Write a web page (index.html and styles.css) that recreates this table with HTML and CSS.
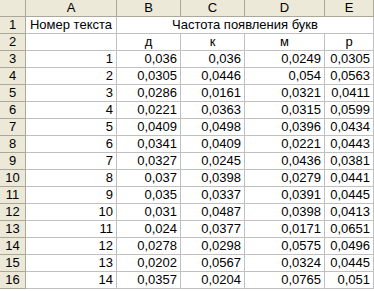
FILE: index.html
```html
<!DOCTYPE html>
<html lang="ru">
<head>
<meta charset="utf-8">
<title>Частота появления букв</title>
<link rel="stylesheet" href="styles.css">
</head>
<body>
<div class="sheet">
  <div class="hd corner"></div>
  <div class="hd col">A</div>
  <div class="hd col">B</div>
  <div class="hd col">C</div>
  <div class="hd col">D</div>
  <div class="hd col">E</div>

  <div class="hd row">1</div>
  <div class="c ctr">Номер текста</div>
  <div class="c ctr merged">Частота появления букв</div>

  <div class="hd row">2</div>
  <div class="c"></div>
  <div class="c ctr">д</div>
  <div class="c ctr">к</div>
  <div class="c ctr">м</div>
  <div class="c ctr">р</div>

  <div class="hd row">3</div>
  <div class="c num">1</div><div class="c num">0,036</div><div class="c num">0,036</div><div class="c num">0,0249</div><div class="c num">0,0305</div>
  <div class="hd row">4</div>
  <div class="c num">2</div><div class="c num">0,0305</div><div class="c num">0,0446</div><div class="c num">0,054</div><div class="c num">0,0563</div>
  <div class="hd row">5</div>
  <div class="c num">3</div><div class="c num">0,0286</div><div class="c num">0,0161</div><div class="c num">0,0321</div><div class="c num">0,0411</div>
  <div class="hd row">6</div>
  <div class="c num">4</div><div class="c num">0,0221</div><div class="c num">0,0363</div><div class="c num">0,0315</div><div class="c num">0,0599</div>
  <div class="hd row">7</div>
  <div class="c num">5</div><div class="c num">0,0409</div><div class="c num">0,0498</div><div class="c num">0,0396</div><div class="c num">0,0434</div>
  <div class="hd row">8</div>
  <div class="c num">6</div><div class="c num">0,0341</div><div class="c num">0,0409</div><div class="c num">0,0221</div><div class="c num">0,0443</div>
  <div class="hd row">9</div>
  <div class="c num">7</div><div class="c num">0,0327</div><div class="c num">0,0245</div><div class="c num">0,0436</div><div class="c num">0,0381</div>
  <div class="hd row">10</div>
  <div class="c num">8</div><div class="c num">0,037</div><div class="c num">0,0398</div><div class="c num">0,0279</div><div class="c num">0,0441</div>
  <div class="hd row">11</div>
  <div class="c num">9</div><div class="c num">0,035</div><div class="c num">0,0337</div><div class="c num">0,0391</div><div class="c num">0,0445</div>
  <div class="hd row">12</div>
  <div class="c num">10</div><div class="c num">0,031</div><div class="c num">0,0487</div><div class="c num">0,0398</div><div class="c num">0,0413</div>
  <div class="hd row">13</div>
  <div class="c num">11</div><div class="c num">0,024</div><div class="c num">0,0377</div><div class="c num">0,0171</div><div class="c num">0,0651</div>
  <div class="hd row">14</div>
  <div class="c num">12</div><div class="c num">0,0278</div><div class="c num">0,0298</div><div class="c num">0,0575</div><div class="c num">0,0496</div>
  <div class="hd row">15</div>
  <div class="c num">13</div><div class="c num">0,0202</div><div class="c num">0,0567</div><div class="c num">0,0324</div><div class="c num">0,0445</div>
  <div class="hd row">16</div>
  <div class="c num">14</div><div class="c num">0,0357</div><div class="c num">0,0204</div><div class="c num">0,0765</div><div class="c num">0,051</div>
</div>
</body>
</html>
```

FILE: styles.css
```css
html, body {
  margin: 0;
  padding: 0;
  background: #ffffff;
}

.sheet {
  display: grid;
  grid-template-columns: 26px 91px 64px 64px 80px 49px;
  grid-auto-rows: 17px;
  font-family: "Liberation Sans", Arial, sans-serif;
  font-size: 13px;
  color: #000000;
  line-height: 16px;
}

.sheet > div {
  box-sizing: border-box;
  white-space: nowrap;
  overflow: hidden;
}

.hd {
  background: #ece9d8;
  border-right: 1px solid #aca899;
  border-bottom: 1px solid #aca899;
  text-align: center;
}

.c {
  border-right: 1px solid #c0c0c0;
  border-bottom: 1px solid #c0c0c0;
}

.ctr {
  text-align: center;
}

.num {
  text-align: right;
  padding-right: 3px;
}

.merged {
  grid-column: span 4;
}
```
